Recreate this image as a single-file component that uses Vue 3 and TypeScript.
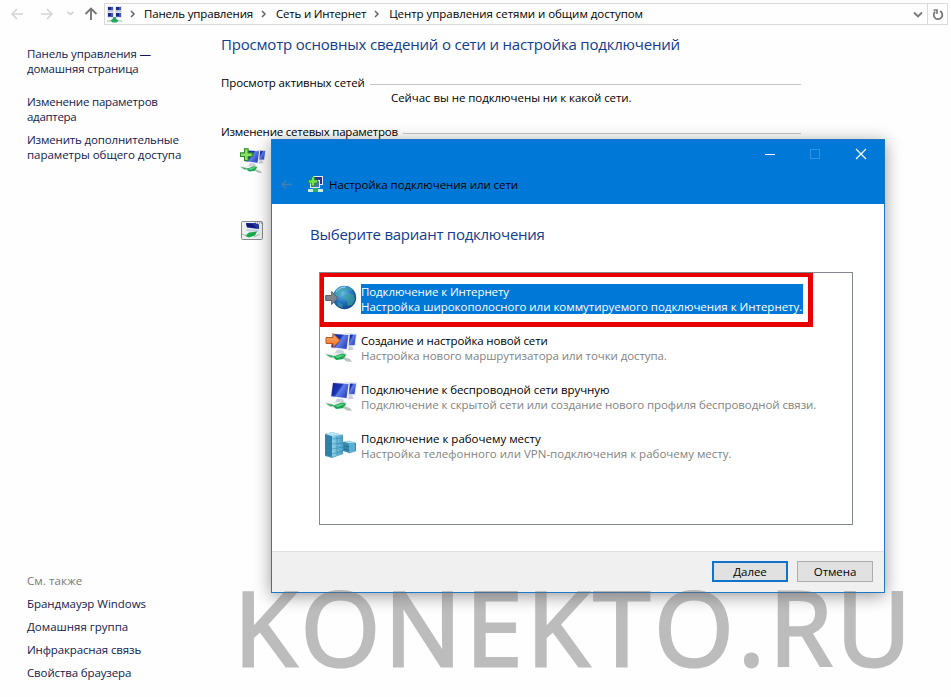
<script setup lang="ts">
interface Option {
  icon: 'globe' | 'create' | 'wireless' | 'servers'
  title: string
  note: string
  cls: string
}

const crumbs: { text: string; cls: string }[] = [
  { text: 'Панель управления', cls: 'c1' },
  { text: 'Сеть и Интернет', cls: 'c2' },
  { text: 'Центр управления сетями и общим доступом', cls: 'c3' },
]

const related: { text: string; cls: string }[] = [
  { text: 'Брандмауэр Windows', cls: 'r1' },
  { text: 'Домашняя группа', cls: 'r2' },
  { text: 'Инфракрасная связь', cls: 'r3' },
  { text: 'Свойства браузера', cls: 'r4' },
]

const options: Option[] = [
  { icon: 'globe', title: 'Подключение к Интернету', note: 'Настройка широкополосного или коммутируемого подключения к Интернету.', cls: 'selected' },
  { icon: 'create', title: 'Создание и настройка новой сети', note: 'Настройка нового маршрутизатора или точки доступа.', cls: 'o2' },
  { icon: 'wireless', title: 'Подключение к беспроводной сети вручную', note: 'Подключение к скрытой сети или создание нового профиля беспроводной связи.', cls: 'o3' },
  { icon: 'servers', title: 'Подключение к рабочему месту', note: 'Настройка телефонного или VPN-подключения к рабочему месту.', cls: 'o4' },
]
</script>

<template>
  <div class="page">
    <svg class="defs" width="0" height="0" aria-hidden="true">
      <defs>
        <linearGradient id="screen" x1="0" y1="0" x2="1" y2="0.6">
          <stop offset="0" stop-color="#0d1c8c" />
          <stop offset="0.5" stop-color="#1d35b6" />
          <stop offset="0.6" stop-color="#5f7fe6" />
          <stop offset="1" stop-color="#2f48c0" />
        </linearGradient>
        <radialGradient id="earth" cx="0.4" cy="0.3" r="0.75">
          <stop offset="0" stop-color="#6fc0f0" />
          <stop offset="0.55" stop-color="#2273bd" />
          <stop offset="1" stop-color="#0d3f86" />
        </radialGradient>
        <linearGradient id="rack" x1="0" y1="0" x2="1" y2="0">
          <stop offset="0" stop-color="#8fd2ea" />
          <stop offset="1" stop-color="#4a9fc6" />
        </linearGradient>
        <linearGradient id="orange" x1="0" y1="0" x2="0" y2="1">
          <stop offset="0" stop-color="#ffb37a" />
          <stop offset="1" stop-color="#ee6a1c" />
        </linearGradient>
        <symbol id="monitors" viewBox="0 0 32 32">
          <path d="M20 2 32 2.500 30.500 15.500 20 16z" fill="#dfe4f2" />
          <path d="M22 3.500 31 3.800 29.500 14 21 14.500z" fill="url(#screen)" />
          <path d="M24 15.500h3l2 3-6 1z" fill="#c9ced4" />
          <path d="M7 2 25 3 23 19.500 5 17.500z" fill="#eceff8" />
          <path d="M8 3 23.500 4 21.500 18 6.200 16.300z" fill="url(#screen)" />
          <path d="M12 18.500l6 .7 2 3.300-10-.5z" fill="#ccd2d8" />
          <path d="M8 22l13 0 1 1.500-14 0z" fill="#e2e6e8" />
          <path d="M0 22.500l6 1 6 2-2 2.500-7-2z" fill="#cfd5d2" />
          <path d="M8 25.500 17 22.500 21 23.500 19 28 11 29z" fill="#17a350" />
          <path d="M9.500 25.800 17 23.500 19.500 24.200 13 27z" fill="#5bd484" />
          <path d="M1 23.500l6 1 2 1-3 1z" fill="#2fb465" />
          <path d="M19 26l6 2 2 3-5-.500-4-2.500z" fill="#bac5be" />
        </symbol>
      </defs>
    </svg>

    <header class="toolbar">
      <svg class="nav" width="104" height="28" viewBox="0 0 104 28" fill="none">
        <path d="M23 14H12M17 9l-5 5 5 5M41 14h11M47 9l5 5-5 5" stroke="#d4d4d4" stroke-width="1.500" />
        <path d="M67.500 12l3 2.500 3-2.500" stroke="#d4d4d4" stroke-width="1.700" />
        <path d="M91 20V9M85.500 14l5.500-5.500 5.500 5.500" stroke="#777" stroke-width="1.900" />
      </svg>
      <div class="address">
        <svg class="net-icon" width="17" height="17" viewBox="0 0 17 17">
          <path d="M1 0h7v6H1zM9 0h7v6H9zM1 6h7v6H1zM9 6h7v6H9z" fill="#dfe4ee" />
          <path d="M2 1h5v3H2zM10 1h5v3h-5zM2 7h5v4H2zM10 7h5v4h-5z" fill="#4358c0" />
          <path d="M2 1h3v3H2zM10 1h3v3h-3zM2 7h3v3H2zM10 7h3v3h-3z" fill="#1a2688" />
          <path d="M2 5h5M10 5h5" stroke="#9ca5b4" />
          <path d="M1 14h15v2H1z" fill="#bfe3d2" />
          <path d="M7.500 11h2l1 2 2 1.500-2 2H6.500l-2-2 2-1.500z" fill="#25a363" />
        </svg>
        <template v-for="c in crumbs" :key="c.text">
          <svg :class="['chev', 'v' + c.cls]" width="6" height="8" viewBox="0 0 6 8" fill="none"><path d="M1 1l3 3-3 3" stroke="#666" stroke-width="1.500" /></svg>
          <span :class="['crumb', c.cls]">{{ c.text }}</span>
        </template>
        <svg class="drop" width="10" height="8" viewBox="0 0 10 8" fill="none"><path d="M1 2.500l4 4 4-4" stroke="#7a7a7a" stroke-width="1.900" /></svg>
        <div class="reload">
          <svg width="12" height="13" viewBox="0 0 12 13" fill="none">
            <path d="M8 3A4.300 4.300 0 1 1 3.200 3.600" stroke="#777" stroke-width="1.800" />
            <path d="M1.500 2h3.500v4" stroke="#777" stroke-width="1.600" />
          </svg>
        </div>
      </div>
    </header>

    <div class="body">
      <aside class="sidebar">
        <a class="home"><span class="s1">Панель управления —</span><span class="s2">домашняя страница</span></a>
        <a class="task"><span class="s3">Изменение параметров</span><span class="s4">адаптера</span></a>
        <a class="task"><span class="s5">Изменить дополнительные</span><span class="s6">параметры общего доступа</span></a>
        <div class="related">
          <span class="also">См. также</span>
          <a v-for="r in related" :key="r.text" :class="r.cls">{{ r.text }}</a>
        </div>
      </aside>

      <main class="content">
        <h1>Просмотр основных сведений о сети и настройка подключений</h1>
        <div class="section first"><span class="active">Просмотр активных сетей</span><i></i></div>
        <p class="status">Сейчас вы не подключены ни к какой сети.</p>
        <div class="section"><span class="change">Изменение сетевых параметров</span><i></i></div>
        <div class="shortcuts">
          <svg width="26" height="26" viewBox="0 0 32 32">
            <use href="#monitors" width="32" height="32" />
            <path d="M5.500 1h4.500v5h5v4.500h-5v5H5.500v-5h-5V6h5z" fill="#8ee05f" stroke="#2b8a26" stroke-width="1.300" />
          </svg>
          <svg width="24" height="21" viewBox="0 0 24 21">
            <rect x="1.500" y="1.500" width="21" height="18" rx="1" fill="#edf0f1" stroke="#84898c" />
            <path d="M15 3h7" stroke="#636b70" stroke-dasharray="1 1" />
            <path d="M6 3h9l4 1.500v4.500l-12-1.500z" fill="#2438a6" />
            <path d="M6 3l6 1 5 4-10-1z" fill="#101a72" />
            <path d="M7 9l12 1-1 2-12-1z" fill="#c6cde0" />
            <path d="M5 16l4-3.500 8-1-2 4-6 2z" fill="#17a84c" />
            <path d="M2 14l5 2M14 17l6-3" stroke="#a9b5ad" />
          </svg>
        </div>
      </main>
    </div>

    <section class="dialog">
      <div class="titlebar">
        <svg class="window-buttons" width="108" height="12" viewBox="0 0 108 12" fill="none">
          <path d="M1 6.500h10" stroke="#fff" />
          <rect x="46.500" y="1.500" width="9" height="9" stroke="#3094e4" />
          <path d="M92 1l10 10M102 1L92 11" stroke="#fff" stroke-width="1.200" />
        </svg>
        <div class="caption">
          <svg class="back" width="13" height="12" viewBox="0 0 13 12" fill="none"><path d="M12 5.500H2M6.500 1L2 5.500 6.500 10" stroke="#3f7fb8" stroke-width="1.700" /></svg>
          <svg class="cap-icon" width="17" height="17" viewBox="0 0 17 17">
            <path d="M6 0h10v9H6z" fill="#e6ebf3" /><path d="M7 1h8v7H7z" fill="#27358f" />
            <path d="M3 4h10v8H3z" fill="#e6ebf3" /><path d="M4 5h8v6H4z" fill="#4a72b4" />
            <path d="M1 13h15v3H1z" fill="#c4ebe1" /><path d="M6 12h5v4H6z" fill="#26ae68" />
            <path d="M4.500 1h3v3h3v3h-3v3h-3V7h-3V4h3z" fill="#79e052" stroke="#20912c" stroke-width=".8" />
          </svg>
          <span>Настройка подключения или сети</span>
        </div>
      </div>
      <div class="pane">
        <h2>Выберите вариант подключения</h2>
        <div class="list">
          <div v-for="o in options" :key="o.title" :class="['option', o.cls]">
            <svg v-if="o.icon === 'globe'" class="icon" width="32" height="32" viewBox="0 0 32 32">
              <circle cx="19.500" cy="15.500" r="11.700" fill="url(#earth)" />
              <path d="M12 8l5-3 5 1-1 3-4 1-1 3-3 1-3 3-1-4zM19 13l5-2 5 2 1 5-3 5-4 1-1-5-4-2zM24 5l4 3-3 1-3-2zM12 20l5 2 1 4-5-2z" fill="#41a99b" opacity=".6" />
              <path d="M11 10a12 12 0 0 1 10-5" stroke="#9ad7f6" fill="none" />
              <path d="M.7 13.500h6V9.500l6 6.500-6 6.500v-4h-6z" fill="#7d858e" stroke="#59616b" />
            </svg>
            <svg v-else-if="o.icon === 'servers'" class="icon" width="32" height="32" viewBox="0 0 32 32">
              <path d="M0 5l7-2 11 3v19l-11 4-7-2z" fill="#4d9fc2" />
              <path d="M0 5l7 2v21l-7-2z" fill="#2f83a8" />
              <path d="M7 7l11-1v19L7 28z" fill="url(#rack)" />
              <path d="M0 5l7-2 11 3-11 1z" fill="#b8e4f2" />
              <path d="M0 9l7 1 11-1M0 14l7 1 11-1M0 19l7 1 11-2M0 24l7 1 11-3M12 7v19" stroke="#297da5" stroke-width=".5" fill="none" />
              <path d="M18 13l6-1 7 2v8l-7 2-6-2z" fill="#3988ae" />
              <path d="M18 12.500l6-1 7 2-7 1z" fill="#a5d9ea" />
              <path d="M24 14.500l6-1v9l-6 2z" fill="#5baed1" />
              <path d="M19 17l5 1M19 20l5 1" stroke="#1e6e97" />
            </svg>
            <svg v-else class="icon" width="32" height="32" viewBox="0 0 32 32">
              <use href="#monitors" width="32" height="32" />
              <path v-if="o.icon === 'create'" d="M1 6.500h7V2.500l7 7-7 7V12.500H1z" fill="url(#orange)" stroke="#bd5a1b" />
            </svg>
            <div class="label"><span class="title">{{ o.title }}</span><span class="note">{{ o.note }}</span></div>
          </div>
        </div>
      </div>
      <footer>
        <button class="primary"><span>Далее</span></button>
        <button><span>Отмена</span></button>
      </footer>
    </section>
    <div class="frame"></div>
    <div class="watermark">KONEKTO.RU</div>
  </div>
</template>

<style>
body { background: #fff; overflow: hidden; }
</style>

<style scoped>
.page {
  position: relative; width: 951px; height: 697px; overflow: hidden; background: #fefefe;
  font: 11.5px/15px "Open Sans", "Noto Sans", sans-serif; color: #000; white-space: nowrap; letter-spacing: -0.08px;
  display: flex; flex-direction: column;
}
.defs { position: absolute; }
svg { display: block; flex: none; }
.toolbar { display: flex; height: 28px; }
.address { display: flex; align-items: center; box-sizing: border-box; width: 844px; height: 22px; margin-top: 3px; border: 1px solid #d9d9d9; }
.net-icon { margin-left: 1px; }
.crumb { margin-bottom: 1px; }
.vc1 { margin-left: 7px; margin-right: 8px; }
.vc2, .vc3 { margin-left: 8px; margin-right: 9px; }
.c1 { letter-spacing: -0.16px; }
.c2 { letter-spacing: -0.21px; }
.c3 { letter-spacing: -0.05px; }
.drop { margin-left: auto; margin-right: 4px; }
.reload { display: flex; align-items: center; justify-content: center; width: 19px; height: 20px; border-left: 1px solid #d9d9d9; }
.body { display: flex; flex: 1; }
.sidebar { display: flex; flex-direction: column; box-sizing: border-box; width: 221px; padding: 18px 0 17px 27px; color: #131950; }
.home, .task { display: flex; flex-direction: column; }
.home { margin-bottom: 18px; }
.task { margin-bottom: 8px; }
.s1 { letter-spacing: -0.12px; }
.s2 { letter-spacing: -0.15px; }
.s3 { letter-spacing: -0.2px; }
.s4 { letter-spacing: -0.3px; }
.s5 { letter-spacing: -0.16px; }
.s6 { letter-spacing: -0.04px; }
.related { display: flex; flex-direction: column; gap: 8px; margin-top: auto; }
.also { color: #777; letter-spacing: 0.1px; }
.r1 { letter-spacing: -0.03px; }
.r2 { letter-spacing: 0; }
.r3, .r4 { letter-spacing: -0.13px; }
.content { width: 580px; }
h1, h2 { margin: 0; font-size: 15px; line-height: 20px; font-weight: 400; color: #113c90; letter-spacing: -0.2px; }
h1 { margin-top: 6px; }
.section { display: flex; align-items: center; gap: 5px; }
.section i { flex: 1; height: 1px; margin-top: 4px; background: #c6c6c6; }
.active { letter-spacing: -0.12px; }
.change { letter-spacing: -0.22px; }
.first { margin-top: 21px; }
.status { margin: 0 0 19px 170px; letter-spacing: -0.06px; }
.shortcuts { display: flex; flex-direction: column; gap: 46px; margin: 9px 0 0 19px; }
.dialog {
  position: absolute; left: 271px; top: 139px; width: 614px; height: 454px; box-sizing: border-box;
  display: flex; flex-direction: column; border: 1px solid #1f78c4; background: #fff; box-shadow: 0 3px 16px rgba(0, 0, 0, .4);
}
.titlebar { height: 64px; background: #0078d7; }
.window-buttons { margin: 8px 0 0 492px; }
.caption { display: flex; align-items: center; margin-top: 15px; padding-left: 8px; height: 19px; }
.cap-icon { margin: 0 5px 0 14px; }
.pane { flex: 1; padding-left: 38px; }
h2 { margin-top: 20px; letter-spacing: -0.25px; }
.list { box-sizing: border-box; width: 534px; height: 253px; margin: 28px 0 0 9px; padding: 9px 0 0 5px; border: 1px solid #828790; }
.option { display: flex; gap: 4px; height: 49px; }
.label { display: flex; flex-direction: column; margin-top: 2px; height: 30px; }
.note { color: #838383; }
.selected .label { background: #0078d7; width: 442px; }
.selected .label span { color: #fff; }
.selected .title { letter-spacing: -0.1px; }
.selected .note { letter-spacing: -0.02px; }
.o2 .title { letter-spacing: -0.14px; }
.o4 .label { letter-spacing: 0; }
footer { display: flex; justify-content: flex-end; gap: 9px; box-sizing: border-box; height: 41px; padding: 9px 11px 0 0; background: #f0f0f0; border-top: 1px solid #dfdfdf; }
button { box-sizing: border-box; width: 76px; height: 21px; padding: 0; font: inherit; letter-spacing: inherit; color: #000; background: #e1e1e1; border: 1px solid #adadad; border-radius: 0; }
.primary { border: 2px solid #0f74c8; }
.frame { position: absolute; left: 320px; top: 273px; width: 493px; height: 54px; box-sizing: border-box; border: solid #e80000; border-width: 4px 5px 5px 4px; }
.watermark { position: absolute; left: 234px; top: 567px; font: 400 102px/120px "Open Sans", sans-serif; letter-spacing: 4.4px; color: #6e6e6e; -webkit-text-stroke: 3px #6e6e6e; opacity: .45; }
</style>
